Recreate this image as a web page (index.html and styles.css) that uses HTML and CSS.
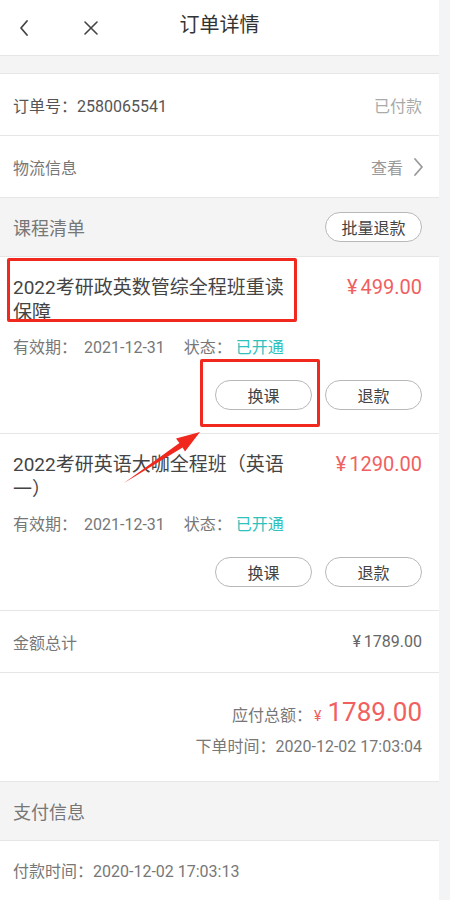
FILE: index.html
```html
<!DOCTYPE html>
<html>
<head>
    <title>订单详情</title>
    <link rel="stylesheet" href="styles.css">
</head>
<body>
<div class="page">
    <div class="topbar">
        <span class="nav-icon back">
            <svg width="12" height="18" viewBox="0 0 12 18"><path d="M9 2 L3 9 L9 16" fill="none" stroke="#444" stroke-width="1.8" stroke-linecap="round" stroke-linejoin="round"/></svg>
        </span>
        <span class="nav-icon close">
            <svg width="18" height="18" viewBox="0 0 18 18"><path d="M3 3 L15 15 M15 3 L3 15" fill="none" stroke="#444" stroke-width="1.6" stroke-linecap="round"/></svg>
        </span>
        <h1 class="title">订单详情</h1>
    </div>

    <div class="spacer"></div>

    <div class="row">
        <span class="label dark">订单号：2580065541</span>
        <span class="muted">已付款</span>
    </div>
    <div class="row">
        <span class="label">物流信息</span>
        <span class="muted link">查看
            <svg width="12" height="20" viewBox="0 0 12 20"><path d="M3 2 L10 10 L3 18" fill="none" stroke="#999" stroke-width="1.8" stroke-linecap="round" stroke-linejoin="round"/></svg>
        </span>
    </div>

    <div class="section">
        <span class="section-title">课程清单</span>
        <button class="pill">批量退款</button>
    </div>

    <div class="course">
        <div class="course-head">
            <div class="course-name">2022考研政英数管综全程班重读保障</div>
            <div class="price"><span class="cur">¥</span>499.00</div>
        </div>
        <div class="meta">
            <span>有效期：</span><span class="date">2021-12-31</span>
            <span class="state">状态：</span><span class="ok">已开通</span>
        </div>
        <div class="actions">
            <button class="pill">换课</button>
            <button class="pill">退款</button>
        </div>
    </div>

    <div class="course">
        <div class="course-head">
            <div class="course-name">2022考研英语大咖全程班（英语一）</div>
            <div class="price"><span class="cur">¥</span>1290.00</div>
        </div>
        <div class="meta">
            <span>有效期：</span><span class="date">2021-12-31</span>
            <span class="state">状态：</span><span class="ok">已开通</span>
        </div>
        <div class="actions">
            <button class="pill">换课</button>
            <button class="pill">退款</button>
        </div>
    </div>

    <div class="row">
        <span class="label">金额总计</span>
        <span class="sum"><span class="cur">¥</span>1789.00</span>
    </div>

    <div class="totals">
        <div class="due">应付总额：<span class="due-cur">¥</span><span class="due-num">1789.00</span></div>
        <div class="time">下单时间：2020-12-02 17:03:04</div>
    </div>

    <div class="section">
        <span class="section-title">支付信息</span>
    </div>

    <div class="row last">
        <span class="label">付款时间：2020-12-02 17:03:13</span>
    </div>

    <!-- annotations drawn on top of the screenshot -->
    <div class="mark mark-title"></div>
    <div class="mark mark-btn"></div>
    <svg class="arrow" width="439" height="900" viewBox="0 0 439 900">
        <polygon points="124,483 182.6,447.4 185,451.5 200,432 176,438.6 179.4,443" fill="#f0281e"/>
    </svg>
</div>
</body>
</html>
```

FILE: styles.css
```css
html { background: #f3f4f6; }
body { margin: 0; font-family: Roboto, "Noto Sans CJK SC", sans-serif; color: #555; }
.page { position: relative; width: 439px; height: 900px; overflow: hidden; background: #fff; }

.topbar { height: 55px; display: flex; align-items: center; border-bottom: 1px solid #e6e6e6; position: relative; }
.nav-icon { display: flex; align-items: center; }
.back { margin-left: 18px; }
.close { margin-left: 52px; }
.title { position: absolute; left: 0; right: 0; top: 0; margin: 0; line-height: 50px; text-align: center; font-size: 20px; font-weight: normal; color: #333; pointer-events: none; }

.spacer { height: 17px; background: #f4f4f4; border-bottom: 1px solid #e6e6e6; }

.row { height: 61px; display: flex; align-items: center; justify-content: space-between; padding: 0 17px 0 13px; border-bottom: 1px solid #e6e6e6; font-size: 16px; }
.row.last { border-bottom: 0; height: 58px; }
.label { color: #777; }
.label.dark { color: #555; }
.muted { color: #aaa; }
.link { display: flex; align-items: center; gap: 9px; color: #999; margin-right: -2px; }
.sum { color: #666; }
.cur { margin-right: 3px; }

.section { height: 58px; display: flex; align-items: center; justify-content: space-between; padding: 0 17px 0 13px; background: #f4f4f4; border-bottom: 1px solid #e6e6e6; }
.section-title { font-size: 18px; color: #777; }

.pill { font-family: inherit; font-size: 16px; color: #444; background: #fff; border: 1px solid #b8b8b8; border-radius: 16px; width: 97px; height: 30px; padding: 0; }

.course { padding: 18px 17px 23px 13px; border-bottom: 1px solid #e6e6e6; }
.course-head { display: flex; justify-content: space-between; }
.course-name { width: 280px; font-size: 19px; line-height: 25px; color: #444; }
.price { font-size: 20px; line-height: 25px; color: #f0605f; }
.meta { margin-top: 11px; font-size: 16px; line-height: 24px; color: #777; display: flex; }
.date { margin-left: 7px; }
.state { margin-left: 19px; margin-right: 4px; }
.ok { color: #2fc1bd; }
.actions { margin-top: 20px; display: flex; justify-content: flex-end; gap: 13px; }

.totals { height: 109px; display: flex; flex-direction: column; align-items: flex-end; justify-content: center; padding: 0 17px; border-bottom: 1px solid #e6e6e6; box-sizing: border-box; }
.due { font-size: 16px; color: #777; display: flex; align-items: baseline; }
.due-cur { color: #f0605f; font-size: 14px; margin: 0 6px 0 2px; }
.due-num { color: #f0605f; font-size: 26px; }
.time { font-size: 16px; color: #777; margin-top: 6px; }

.mark { position: absolute; border: 3px solid #f0281e; border-radius: 2px; box-sizing: border-box; }
.mark-title { left: 7px; top: 258px; width: 290px; height: 64px; }
.mark-btn { left: 200px; top: 359px; width: 120px; height: 68px; }
.arrow { position: absolute; left: 0; top: 0; pointer-events: none; }
```
